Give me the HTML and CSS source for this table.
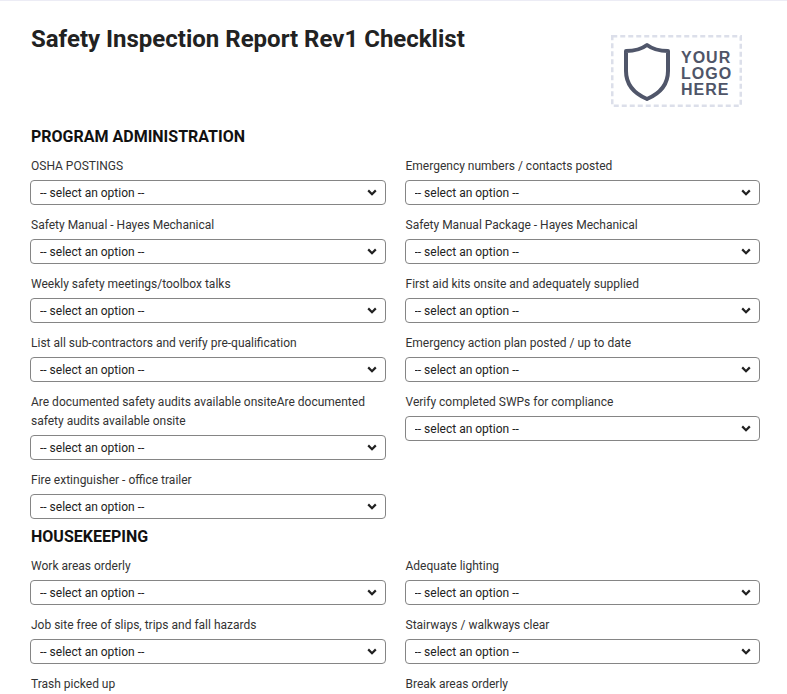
FILE: index.html
```html
<!DOCTYPE html>
<html lang="en">
<head>
<meta charset="utf-8">
<title>Safety Inspection Report Rev1 Checklist</title>
<link rel="stylesheet" href="styles.css">
</head>
<body>
<div class="page">
  <header class="header">
    <h1 class="title">Safety Inspection Report Rev1 Checklist</h1>
    <div class="logo">
      <svg width="131" height="72" viewBox="0 0 131 72">
        <rect x="1.25" y="1.25" width="128.5" height="69.5" fill="none" stroke="#dcdfea" stroke-width="2.5" stroke-dasharray="5 3"/>
        <path d="M36 10 Q44 16 57 16 L57 36 Q57 55 36 64 Q15 55 15 36 L15 16 Q28 16 36 10 Z" fill="none" stroke="#50566a" stroke-width="4" stroke-linejoin="round"/>
        <text class="logo-text" x="70" y="28">YOUR</text>
        <text class="logo-text" x="70" y="44">LOGO</text>
        <text class="logo-text" x="70" y="60">HERE</text>
      </svg>
    </div>
  </header>

  <section class="section">
    <h2 class="section-title">PROGRAM ADMINISTRATION</h2>
    <div class="grid">
      <div class="field"><label class="label">OSHA POSTINGS</label><select class="select"><option>-- select an option --</option></select></div>
      <div class="field"><label class="label">Emergency numbers / contacts posted</label><select class="select"><option>-- select an option --</option></select></div>
      <div class="field"><label class="label">Safety Manual - Hayes Mechanical</label><select class="select"><option>-- select an option --</option></select></div>
      <div class="field"><label class="label">Safety Manual Package - Hayes Mechanical</label><select class="select"><option>-- select an option --</option></select></div>
      <div class="field"><label class="label">Weekly safety meetings/toolbox talks</label><select class="select"><option>-- select an option --</option></select></div>
      <div class="field"><label class="label">First aid kits onsite and adequately supplied</label><select class="select"><option>-- select an option --</option></select></div>
      <div class="field"><label class="label">List all sub-contractors and verify pre-qualification</label><select class="select"><option>-- select an option --</option></select></div>
      <div class="field"><label class="label">Emergency action plan posted / up to date</label><select class="select"><option>-- select an option --</option></select></div>
      <div class="field"><label class="label">Are documented safety audits available onsiteAre documented safety audits available onsite</label><select class="select"><option>-- select an option --</option></select></div>
      <div class="field"><label class="label">Verify completed SWPs for compliance</label><select class="select"><option>-- select an option --</option></select></div>
      <div class="field"><label class="label">Fire extinguisher - office trailer</label><select class="select"><option>-- select an option --</option></select></div>
    </div>
  </section>

  <section class="section">
    <h2 class="section-title">HOUSEKEEPING</h2>
    <div class="grid">
      <div class="field"><label class="label">Work areas orderly</label><select class="select"><option>-- select an option --</option></select></div>
      <div class="field"><label class="label">Adequate lighting</label><select class="select"><option>-- select an option --</option></select></div>
      <div class="field"><label class="label">Job site free of slips, trips and fall hazards</label><select class="select"><option>-- select an option --</option></select></div>
      <div class="field"><label class="label">Stairways / walkways clear</label><select class="select"><option>-- select an option --</option></select></div>
      <div class="field"><label class="label">Trash picked up</label><select class="select"><option>-- select an option --</option></select></div>
      <div class="field"><label class="label">Break areas orderly</label><select class="select"><option>-- select an option --</option></select></div>
    </div>
  </section>
</div>
</body>
</html>
```

FILE: styles.css
```css
html, body {
  margin: 0;
  padding: 0;
  background: #ffffff;
}

body {
  font-family: Roboto, "Liberation Sans", Arial, sans-serif;
  color: #222222;
  border-top: 1px solid #ececf5;
}

.page {
  width: 730px;
  padding: 23px 0 0 30px;
}

.header {
  display: flex;
  justify-content: space-between;
  align-items: flex-start;
  margin-bottom: 20px;
}

.title {
  margin: 0 0 0 1px;
  font-size: 24px;
  line-height: 30px;
  font-weight: 700;
  color: #222222;
}

.logo {
  margin-top: 11px;
  margin-right: 18px;
  line-height: 0;
}

.logo-text {
  font-family: "Liberation Sans", Arial, sans-serif;
  font-weight: 700;
  font-size: 16px;
  letter-spacing: 1px;
  fill: #4f5568;
}

.section-title {
  margin: 0 0 10px 1px;
  font-size: 16px;
  line-height: 20px;
  font-weight: 700;
  color: #111111;
}

.grid {
  display: grid;
  grid-template-columns: 1fr 1fr;
  column-gap: 19px;
  row-gap: 11px;
  margin-bottom: 8px;
}

.field {
  display: flex;
  flex-direction: column;
}

.label {
  display: block;
  font-size: 12px;
  line-height: 19px;
  color: #333333;
  margin: 0 0 4px 1px;
}

.select {
  appearance: none;
  -webkit-appearance: none;
  box-sizing: border-box;
  width: 100%;
  height: 25px;
  margin: 0;
  padding: 0 24px 0 9px;
  font-family: Roboto, "Liberation Sans", Arial, sans-serif;
  font-size: 12px;
  color: #222222;
  background-color: #ffffff;
  border: 1px solid #858585;
  border-radius: 4px;
  background-image: url("data:image/svg+xml;utf8,<svg xmlns='http://www.w3.org/2000/svg' width='10' height='7' viewBox='0 0 10 7'><path d='M1.2 1.4 L5 5.2 L8.8 1.4' fill='none' stroke='%23222' stroke-width='2.2'/></svg>");
  background-repeat: no-repeat;
  background-position: right 8px center;
}
```
